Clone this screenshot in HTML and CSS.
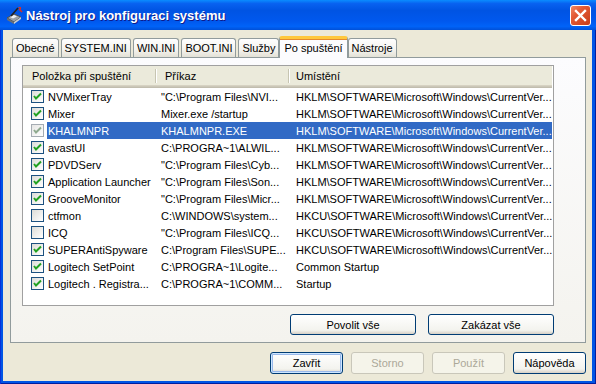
FILE: index.html
```html
<!DOCTYPE html>
<html lang="cs">
<head>
  <meta charset="UTF-8">
  <title>Nástroj pro konfiguraci systému</title>
  <link rel="stylesheet" href="styles.css">
</head>
<body>
  <div class="window">
    <div class="titlebar">
      <svg class="appicon" width="18" height="18" viewBox="0 0 18 18">
        <path d="M2 12 L9 8 L16 11 L9 16 Z" fill="#9aa0a6" stroke="#4a4f55" stroke-width="1"/>
        <path d="M2 12 L2 14 L9 18 L9 16 Z" fill="#6b7076"/>
        <path d="M9 16 L9 18 L16 13 L16 11 Z" fill="#c9cdd1"/>
        <path d="M5 11 L9 9 L12 10.5 L8 12.5 Z" fill="#eef1f4"/>
        <path d="M6 10 L13 2" stroke="#222" stroke-width="1.6"/>
        <path d="M13 1 L16 1 L16 4 Z" fill="#e0301e"/>
        <path d="M14 3 L17 6" stroke="#e0301e" stroke-width="1.4"/>
      </svg>
      <span class="title">Nástroj pro konfiguraci systému</span>
      <div class="closebtn">
        <svg width="13" height="13" viewBox="0 0 13 13">
          <path d="M2 2 L11 11 M11 2 L2 11" stroke="#fff" stroke-width="2.4" stroke-linecap="square"/>
        </svg>
      </div>
    </div>

    <div class="client">
      <div class="tabs">
        <div class="tab">Obecné</div>
        <div class="tab">SYSTEM.INI</div>
        <div class="tab">WIN.INI</div>
        <div class="tab">BOOT.INI</div>
        <div class="tab">Služby</div>
        <div class="tab active">Po spuštění</div>
        <div class="tab">Nástroje</div>
      </div>

      <div class="panel">
        <div class="list">
          <div class="list-head">
            <div class="hcell c1">Položka při spuštění</div>
            <div class="sep"></div>
            <div class="hcell c2">Příkaz</div>
            <div class="sep"></div>
            <div class="hcell c3">Umístění</div>
          </div>

          <div class="row">
            <span class="check on"></span>
            <div class="row-body"><span class="cell n">NVMixerTray</span><span class="cell p">"C:\Program Files\NVI...</span><span class="cell u">HKLM\SOFTWARE\Microsoft\Windows\CurrentVer...</span></div>
          </div>
          <div class="row">
            <span class="check on"></span>
            <div class="row-body"><span class="cell n">Mixer</span><span class="cell p">Mixer.exe /startup</span><span class="cell u">HKLM\SOFTWARE\Microsoft\Windows\CurrentVer...</span></div>
          </div>
          <div class="row selected">
            <span class="check on"></span>
            <div class="row-body"><span class="cell n">KHALMNPR</span><span class="cell p">KHALMNPR.EXE</span><span class="cell u">HKLM\SOFTWARE\Microsoft\Windows\CurrentVer...</span></div>
          </div>
          <div class="row">
            <span class="check on"></span>
            <div class="row-body"><span class="cell n">avastUI</span><span class="cell p">C:\PROGRA~1\ALWIL...</span><span class="cell u">HKLM\SOFTWARE\Microsoft\Windows\CurrentVer...</span></div>
          </div>
          <div class="row">
            <span class="check on"></span>
            <div class="row-body"><span class="cell n">PDVDServ</span><span class="cell p">"C:\Program Files\Cyb...</span><span class="cell u">HKLM\SOFTWARE\Microsoft\Windows\CurrentVer...</span></div>
          </div>
          <div class="row">
            <span class="check on"></span>
            <div class="row-body"><span class="cell n">Application Launcher</span><span class="cell p">"C:\Program Files\Son...</span><span class="cell u">HKLM\SOFTWARE\Microsoft\Windows\CurrentVer...</span></div>
          </div>
          <div class="row">
            <span class="check on"></span>
            <div class="row-body"><span class="cell n">GrooveMonitor</span><span class="cell p">"C:\Program Files\Micr...</span><span class="cell u">HKLM\SOFTWARE\Microsoft\Windows\CurrentVer...</span></div>
          </div>
          <div class="row">
            <span class="check"></span>
            <div class="row-body"><span class="cell n">ctfmon</span><span class="cell p">C:\WINDOWS\system...</span><span class="cell u">HKCU\SOFTWARE\Microsoft\Windows\CurrentVer...</span></div>
          </div>
          <div class="row">
            <span class="check"></span>
            <div class="row-body"><span class="cell n">ICQ</span><span class="cell p">"C:\Program Files\ICQ...</span><span class="cell u">HKCU\SOFTWARE\Microsoft\Windows\CurrentVer...</span></div>
          </div>
          <div class="row">
            <span class="check on"></span>
            <div class="row-body"><span class="cell n">SUPERAntiSpyware</span><span class="cell p">C:\Program Files\SUPE...</span><span class="cell u">HKCU\SOFTWARE\Microsoft\Windows\CurrentVer...</span></div>
          </div>
          <div class="row">
            <span class="check on"></span>
            <div class="row-body"><span class="cell n">Logitech SetPoint</span><span class="cell p">C:\PROGRA~1\Logite...</span><span class="cell u">Common Startup</span></div>
          </div>
          <div class="row">
            <span class="check on"></span>
            <div class="row-body"><span class="cell n">Logitech . Registra...</span><span class="cell p">C:\PROGRA~1\COMM...</span><span class="cell u">Startup</span></div>
          </div>
        </div>

        <div class="panel-buttons">
          <div class="btn wide">Povolit vše</div>
          <div class="btn wide">Zakázat vše</div>
        </div>
      </div>

      <div class="dialog-buttons">
        <div class="btn default">Zavřit</div>
        <div class="btn disabled">Storno</div>
        <div class="btn disabled">Použít</div>
        <div class="btn">Nápověda</div>
      </div>
    </div>
  </div>
</body>
</html>
```

FILE: styles.css
```css
*{
  margin: 0;
  padding: 0;
  box-sizing: border-box;
}

body{
  font: 11px "Liberation Sans", Arial, sans-serif;
  color: #000;
  background: #0054e3;
}

.window{
  width: 596px;
  height: 384px;
  display: flex;
  flex-direction: column;
  background: #0055e5;
  box-shadow: inset 1px 0 0 #0831d9, inset -1px 0 0 #001ea0, inset 0 -1px 0 #001ea0;
}

/* title bar */
.titlebar{
  height: 30px;
  display: flex;
  align-items: center;
  padding: 0 5px 0 5px;
  background: linear-gradient(#0a8cff 0, #0862f0 12%, #0054e3 35%, #0058ee 70%, #0063f8 88%, #0050d8 100%);
  color: #fff;
}

.appicon{
  flex: none;
  margin-right: 3px;
}

.title{
  font: bold 13px "Liberation Sans", Arial, sans-serif;
  text-shadow: 1px 1px 0 #0f1a89;
  flex: 1;
}

.closebtn{
  width: 21px;
  height: 21px;
  border: 1px solid #fff;
  border-radius: 3px;
  background: linear-gradient(135deg, #f08866 0, #e35a35 35%, #c83c18 100%);
  display: flex;
  align-items: center;
  justify-content: center;
}

/* client area */
.client{
  flex: 1;
  margin: 0 4px 3px 3px;
  background: #ece9d8;
  padding: 6px 6px 0 7px;
  display: flex;
  flex-direction: column;
}

.tabs{
  height: 21px;
  display: flex;
  align-items: flex-end;
  padding-left: 2px;
}

.tab{
  height: 19px;
  line-height: 18px;
  padding: 0 3px;
  margin-right: 2px;
  border: 1px solid #919b9c;
  border-bottom: none;
  border-radius: 3px 3px 0 0;
  background: linear-gradient(#fefefe, #f4f3ee 60%, #e3e1d6);
  white-space: nowrap;
}

.tab.active{
  height: 22px;
  line-height: 19px;
  margin: 0 0 -1px -2px;
  padding: 0 4px;
  border-top: 3px solid #ffc83c;
  box-shadow: inset 0 1px 0 #e68b2c;
  background: #fcfcfe;
  position: relative;
  z-index: 1;
}

.panel{
  height: 286px;
  border: 1px solid #919b9c;
  background: linear-gradient(#fcfcfe, #f4f3ee);
  padding: 7px 31px 7px 11px;
  display: flex;
  flex-direction: column;
}

/* list view */
.list{
  height: 241px;
  border: 1px solid #a0a0a0;
  background: #fff;
}

.list-head{
  height: 22px;
  display: flex;
  align-items: center;
  background: #ebeadb;
  box-shadow: inset 0 -1px 0 #c1bdae, inset 0 -2px 0 #cbc7b8, inset 0 -3px 0 #d6d2c2;
  margin-right: 1px;
}

.hcell{
  height: 100%;
  line-height: 21px;
  white-space: nowrap;
}

.hcell.c1{
  width: 132px;
  padding-left: 9px;
}

.hcell.c2{
  width: 131px;
  padding-left: 8px;
}

.hcell.c3{
  flex: 1;
  padding-left: 6px;
}

.sep{
  width: 2px;
  height: 14px;
  border-left: 1px solid #c7c5b2;
  border-right: 1px solid #fff;
  margin-bottom: 2px;
}

.row{
  height: 17px;
  display: flex;
  align-items: center;
}

.check{
  flex: none;
  width: 13px;
  height: 13px;
  margin: 0 3px 0 8px;
  border: 1px solid #1c5180;
  background: linear-gradient(135deg, #dcdcd7, #fff);
}

.check.on{
  background: url("data:image/svg+xml;utf8,<svg xmlns='http://www.w3.org/2000/svg' width='11' height='11'><path d='M2 5 L4 7.5 L9 2.5' fill='none' stroke='%2321a121' stroke-width='2'/></svg>") center no-repeat, linear-gradient(135deg, #dcdcd7, #fff);
}

.row.selected .check{
  opacity: .7;
  border-color: #6a8cb0;
  filter: saturate(.3);
}

.row-body{
  flex: 1;
  height: 100%;
  display: flex;
  align-items: center;
  margin-right: 1px;
}

.row.selected .row-body{
  background: #316ac5;
  color: #fff;
}

.cell{
  white-space: nowrap;
  overflow: hidden;
}

.cell.n{
  width: 110px;
  padding-left: 1px;
}

.cell.p{
  width: 133px;
  padding-left: 4px;
}

.cell.u{
  flex: 1;
  padding-left: 6px;
}

/* buttons */
.panel-buttons{
  display: flex;
  justify-content: flex-end;
  gap: 12px;
  margin-top: 8px;
}

.dialog-buttons{
  display: flex;
  justify-content: flex-end;
  gap: 8px;
  margin-top: 9px;
}

.btn{
  width: 73px;
  height: 22px;
  border: 1px solid #003c74;
  border-radius: 3px;
  background: linear-gradient(#fff, #f3f3ee 80%, #d6d0c5);
  display: flex;
  align-items: center;
  justify-content: center;
}

.btn.wide{
  width: 126px;
  height: 21px;
}

.btn.default{
  box-shadow: inset 0 0 0 1px #cee7ff, inset 0 0 0 2px #98b8ea;
}

.btn.disabled{
  border-color: #c9c7ba;
  background: #f5f4ea;
  color: #aca899;
}
```
